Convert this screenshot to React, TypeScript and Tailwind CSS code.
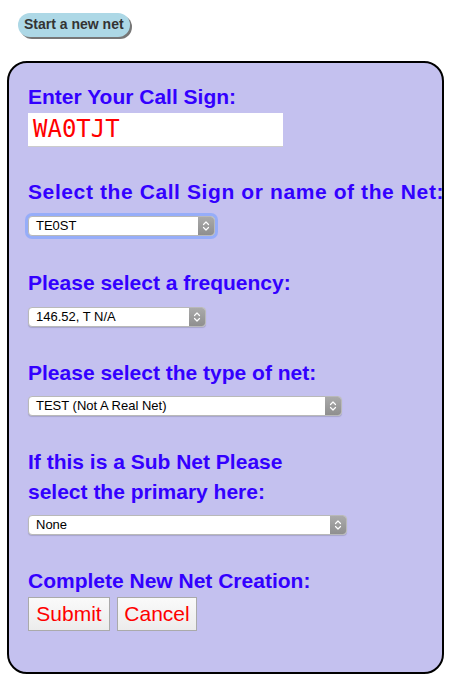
import React from "react";

function Chevrons() {
  return (
    <svg width="8" height="12" viewBox="0 0 8 12" fill="none" stroke="#ffffff" strokeWidth="1.2" strokeLinecap="round" strokeLinejoin="round">
      <path d="M1.5 4.5 L4 2 L6.5 4.5" />
      <path d="M1.5 7.5 L4 10 L6.5 7.5" />
    </svg>
  );
}

function FakeSelect({ value, width, focus }: { value: string; width: string; focus?: boolean }) {
  return (
    <div
      className={`${width} h-[20px] flex rounded-[4px] overflow-hidden border border-[#b9b9b9] bg-white ${
        focus ? "shadow-[0_0_0_3px_rgba(120,160,255,0.6)]" : "shadow-[0_1px_1px_rgba(0,0,0,0.15)]"
      }`}
    >
      <div className="flex-1 flex items-center pl-[7px] text-[13px] text-black leading-none font-['Liberation_Sans',Arial,sans-serif]">
        {value}
      </div>
      <div className="w-[16px] flex items-center justify-center bg-gradient-to-b from-[#aaaaaa] to-[#8f8f8f]">
        <Chevrons />
      </div>
    </div>
  );
}

function Label({ children, className = "" }: { children: React.ReactNode; className?: string }) {
  return (
    <div className={`text-[21px] leading-[30px] font-bold text-[#3300ff] whitespace-nowrap ${className}`}>{children}</div>
  );
}

export default function App() {
  return (
    <div className="w-[456px] h-[683px] bg-white font-['Liberation_Sans',Arial,sans-serif] relative">
      <div className="pt-[12px] pl-[18px]">
        <div className="inline-flex items-center h-[24px] px-[6px] rounded-full bg-[#add8e6] shadow-[2px_2px_0_#777] text-[14px] font-bold text-[#333]">
          Start a new net
        </div>
      </div>
      <div className="mt-[24px] ml-[7px] w-[437px] h-[613px] border-2 border-black rounded-[20px] bg-[#c4c1ef] pt-[19px] pl-[19px]">
        <Label>Enter Your Call Sign:</Label>
        <div className="mt-[1px] w-[255px] h-[34px] bg-white border-b border-[#cccccc] flex items-center pl-[5px]">
          <span className="text-[24px] text-[#ff0000] font-['DejaVu_Sans_Mono',monospace] leading-none">WA0TJT</span>
        </div>

        <Label className="mt-[30px] tracking-[0.6px]">Select the Call Sign or name of the Net:</Label>
        <div className="mt-[9px]">
          <FakeSelect value="TE0ST" width="w-[187px]" focus />
        </div>

        <Label className="mt-[32px]">Please select a frequency:</Label>
        <div className="mt-[9px]">
          <FakeSelect value="146.52, T N/A" width="w-[178px]" />
        </div>

        <Label className="mt-[31px]">Please select the type of net:</Label>
        <div className="mt-[8px]">
          <FakeSelect value="TEST (Not A Real Net)" width="w-[314px]" />
        </div>

        <Label className="mt-[31px]">
          If this is a Sub Net Please
          <br />
          select the primary here:
        </Label>
        <div className="mt-[8px]">
          <FakeSelect value="None" width="w-[319px]" />
        </div>

        <Label className="mt-[31px]">Complete New Net Creation:</Label>
        <div className="mt-[1px] flex gap-[7px]">
          <div className="w-[82px] h-[34px] flex items-center justify-center border border-[#aaaaaa] bg-gradient-to-b from-[#fafafa] to-[#ececec] text-[21px] text-[#ff0000]">
            Submit
          </div>
          <div className="w-[80px] h-[34px] flex items-center justify-center border border-[#aaaaaa] bg-gradient-to-b from-[#fafafa] to-[#ececec] text-[21px] text-[#ff0000]">
            Cancel
          </div>
        </div>
      </div>
    </div>
  );
}
